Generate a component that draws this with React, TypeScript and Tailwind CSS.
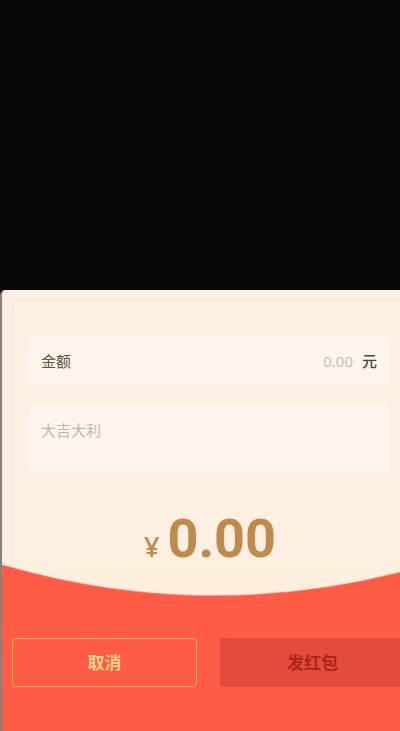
import React from "react";

const cjk = { fontFamily: '"Noto Sans", "Noto Sans CJK SC", sans-serif' };

export default function App() {
  return (
    <div className="w-[400px] h-[731px] overflow-hidden flex flex-col bg-[#050608]" style={cjk}>
      {/* dimmed page behind the sheet */}
      <div className="h-[290px] shrink-0" />

      {/* Red packet sheet */}
      <div className="flex-1 flex flex-col bg-[#fdf0e3] rounded-tl-[5px] border-l-2 border-[#8a7f76]">
        <div className="h-[275px] shrink-0 pt-[10px] pl-[10px] overflow-visible">
          <div className="h-full border-l border-t border-[#f7e4d0] rounded-tl-[6px] pt-[36px] pl-[16px] pr-[11px] flex flex-col">
            {/* Amount row */}
            <div className="h-[48px] shrink-0 rounded-[3px] bg-[#fef6ee] flex items-center px-[12px]">
              <span className="text-[15px] text-[#5e5040]">金额</span>
              <span className="ml-auto text-[15px] text-[#c9bdb2]">0.00</span>
              <span className="ml-[9px] text-[15px] font-medium text-[#4e4136]">元</span>
            </div>

            {/* Greeting */}
            <div className="mt-[18px] h-[69px] shrink-0 rounded-[3px] bg-[#fef6ee] px-[12px] pt-[15px]">
              <span className="text-[15px] text-[#c4b5a8]">大吉大利</span>
            </div>

            {/* Total */}
            <div className="mt-[40px] shrink-0 flex items-baseline justify-center pl-[2px] text-[#c08a4d]">
              <span className="text-[27px] font-medium mr-[8px]">¥</span>
              <span
                className="text-[54px] font-bold leading-[54px]"
                style={{ fontFamily: "Roboto, 'Noto Sans', sans-serif" }}
              >
                0.00
              </span>
            </div>
          </div>
        </div>

        {/* Red envelope flap */}
        <div className="flex-1 flex flex-col bg-[#fe5c47]">
          <svg width="400" height="32" viewBox="0 0 400 32" className="block shrink-0">
            <path d="M0 0 H400 V7 Q200 58 0 0 Z" fill="#fdeedd" />
            <path d="M0 0 Q200 58 400 7" fill="none" stroke="#e9664f" strokeWidth="1" opacity="0.5" />
          </svg>
          <div className="mt-[41px] flex items-center gap-[23px] pl-[10px]">
            <button
              type="button"
              className="w-[185px] h-[49px] shrink-0 rounded-[4px] border border-[#f5b04c] text-[17px] font-bold text-[#fcd28c] flex items-center justify-center"
            >
              取消
            </button>
            <button
              type="button"
              className="w-[185px] h-[49px] shrink-0 rounded-[3px] bg-[#e44b3b] text-[17px] font-bold text-[#a9261d] flex items-center justify-center"
            >
              发红包
            </button>
          </div>
        </div>
      </div>
    </div>
  );
}
